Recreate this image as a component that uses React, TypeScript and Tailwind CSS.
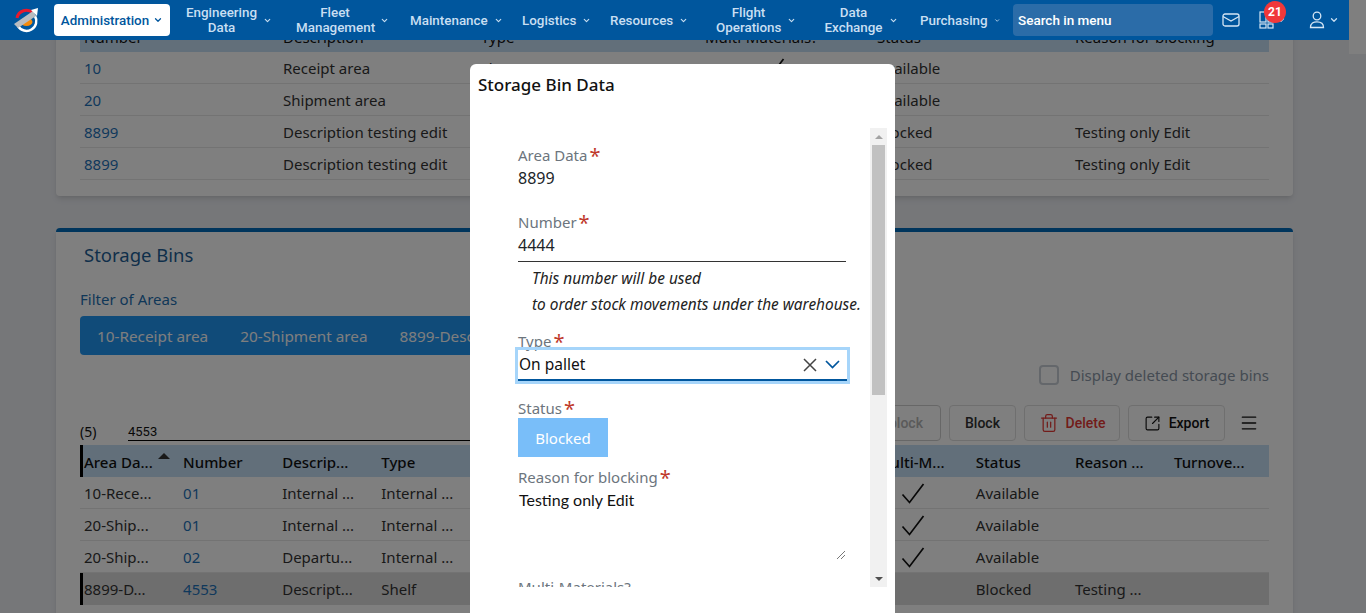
import { ChevronDown, Menu, SquareArrowOutUpRight, Trash2 } from 'lucide-react';

const navItems = [
  { lines: ['Engineering', 'Data'], slot: 'w-[110px]', width: 'w-[71px]' },
  { lines: ['Fleet', 'Management'], slot: 'w-[114px]', width: 'w-[78px]' },
  { lines: ['Maintenance'], slot: 'w-[112px]', width: '' },
  { lines: ['Logistics'], slot: 'w-[88px]', width: '' },
  { lines: ['Resources'], slot: 'w-[106px]', width: '' },
  { lines: ['Flight', 'Operations'], slot: 'w-[108px]', width: 'w-[65px]' },
  { lines: ['Data', 'Exchange'], slot: 'w-[96px]', width: 'w-[59px]' },
  { lines: ['Purchasing'], slot: 'w-[80px]', width: '' },
];

const areaRows = [
  { number: '10', description: 'Receipt area', type: 'Floor', check: true, status: 'Available', reason: '' },
  { number: '20', description: 'Shipment area', type: 'Floor', check: false, status: 'Available', reason: '' },
  { number: '8899', description: 'Description testing edit', type: 'Floor', check: false, status: 'Blocked', reason: 'Testing only Edit' },
  { number: '8899', description: 'Description testing edit', type: 'Floor', check: false, status: 'Blocked', reason: 'Testing only Edit' },
];

const binRows = [
  { area: '10-Rece...', number: '01', description: 'Internal ...', type: 'Internal ...', check: true, status: 'Available', reason: '', selected: false },
  { area: '20-Ship...', number: '01', description: 'Internal ...', type: 'Internal ...', check: true, status: 'Available', reason: '', selected: false },
  { area: '20-Ship...', number: '02', description: 'Departu...', type: 'Internal ...', check: true, status: 'Available', reason: '', selected: false },
  { area: '8899-D...', number: '4553', description: 'Descript...', type: 'Shelf', check: false, status: 'Blocked', reason: 'Testing ...', selected: true },
];

function Logo() {
  return (
    <svg width="28" height="26" viewBox="0 0 28 26" fill="none">
      <path d="M5 11 A9.5 9.5 0 0 1 21 6" stroke="#e8192c" strokeWidth="3" />
      <path d="M6 19 A9.5 9.5 0 0 0 23 9" stroke="#ffffff" strokeWidth="2.5" />
      <ellipse cx="14.5" cy="15" rx="6" ry="4" fill="#f58a0b" />
      <path d="M2 17 L21 4 L24 9 L6 21 Z" fill="#b9bcc0" />
      <path d="M19 3 L26 1 L25 9 Z" fill="#ffffff" />
    </svg>
  );
}

function MailIcon() {
  return (
    <svg width="18" height="14" viewBox="0 0 18 14" fill="none" stroke="#d5e6f5" strokeWidth="1.3">
      <rect x="1" y="1" width="16" height="12" rx="2" />
      <path d="M1 3.5 L9 8 L17 3.5" />
    </svg>
  );
}

function AppsIcon() {
  return (
    <svg width="16" height="18" viewBox="0 0 16 18" fill="none" stroke="#d5e6f5" strokeWidth="1.2">
      <rect x="1" y="1" width="6" height="10" />
      <rect x="1" y="13" width="6" height="4" />
      <rect x="9" y="13" width="5" height="4" />
      <rect x="9" y="6" width="5" height="5" />
    </svg>
  );
}

function UserIcon() {
  return (
    <svg width="16" height="18" viewBox="0 0 16 18" fill="none" stroke="#d5e6f5" strokeWidth="1.3">
      <circle cx="8" cy="5" r="3.8" />
      <path d="M1.5 16.5 C1.5 12 4.5 10.8 8 10.8 C11.5 10.8 14.5 12 14.5 16.5 Z" />
    </svg>
  );
}

function CheckMark() {
  return (
    <svg width="24" height="22" viewBox="0 0 24 22" fill="none" stroke="#111111" strokeWidth="1.7">
      <path d="M1.5 11.5 L8.5 19.5 L22.5 1" />
    </svg>
  );
}

function Required({ label }: { label: string }) {
  return (
    <div className="h-[22px] text-[15px] leading-[22px] text-[#6c757d]">
      {label}
      <span className="ml-[2px] align-[-2px] text-[20px] leading-none text-[#c0392b]">*</span>
    </div>
  );
}

export default function App() {
  return (
    <div className="relative flex h-[613px] w-[1366px] overflow-hidden bg-[#eceef3] font-['Noto_Sans',sans-serif]">
      <div className="w-[1349px] shrink-0">
        {/* Top bar */}
        <header className="relative z-30 flex h-10 items-center bg-[#00569d] font-['Roboto',sans-serif] text-[13.4px] font-medium leading-[15px] text-[#c9dff2]">
          <div className="ml-[12px] flex w-[28px] justify-center">
            <Logo />
          </div>
          <button className="ml-[14px] flex h-8 w-[116px] items-center justify-center gap-[4px] rounded bg-white text-[#00569d]">
            Administration
            <ChevronDown size={10} strokeWidth={3} />
          </button>
          <nav className="ml-[16px] flex w-[814px] items-center">
            {navItems.map((item) => (
              <div key={item.lines[0]} className={`flex shrink-0 items-center gap-[6px] ${item.slot}`}>
                <div className={`text-center ${item.width}`}>
                  {item.lines.map((line) => (
                    <div key={line}>{line}</div>
                  ))}
                </div>
                <ChevronDown size={9} strokeWidth={3} />
              </div>
            ))}
          </nav>
          <div className="ml-[13px] flex h-8 w-[200px] items-center rounded bg-[#2b6ca8] pl-[5px] text-[13.5px] text-white">Search in menu</div>
          <div className="ml-[9px] flex w-[18px] justify-center">
            <MailIcon />
          </div>
          <div className="relative ml-[19px] flex items-center gap-[1px]">
            <AppsIcon />
            <ChevronDown size={10} strokeWidth={3} />
            <span className="absolute -top-[10px] left-[5px] flex h-[22px] w-[22px] items-center justify-center rounded-full bg-[#f0383a] text-[12px] font-bold text-white">21</span>
          </div>
          <div className="ml-[23px] flex items-center gap-[4px]">
            <UserIcon />
            <ChevronDown size={10} strokeWidth={3} />
          </div>
        </header>

        <main className="-mt-5 px-[56px]">
          {/* Areas card */}
          <section className="rounded-b bg-white px-6 pb-4 shadow-md">
            <div className="grid h-8 grid-cols-[199px_198px_224px_172px_198px_1fr] items-center bg-[#c5dff5] pl-1 pt-[2px] text-[15px] text-[#111111]">
              <span>Number</span>
              <span>Description</span>
              <span>Type</span>
              <span>Multi-Materials?</span>
              <span>Status</span>
              <span>Reason for blocking</span>
            </div>
            {areaRows.map((row, index) => (
              <div key={index} className="grid h-8 grid-cols-[199px_198px_224px_172px_198px_1fr] items-center border-b border-[#e6e6e6] pl-1 pt-[2px] text-[15px] text-[#333333]">
                <span className="text-[#1f72b8]">{row.number}</span>
                <span>{row.description}</span>
                <span>{row.type}</span>
                <span className="pl-[56px]">{row.check && <CheckMark />}</span>
                <span>{row.status}</span>
                <span>{row.reason}</span>
              </div>
            ))}
          </section>

          {/* Storage bins card */}
          <section className="mt-8 rounded-t border-t-4 border-[#006ab8] bg-white px-6 pb-4 shadow-md">
            <h2 className="ml-1 pt-[9px] text-[18.5px] leading-7 text-[#1f5f96]">Storage Bins</h2>
            <div className="mt-[19px] text-[15px] leading-[22px] text-[#1f6fb0]">Filter of Areas</div>
            <div className="mt-[6px] inline-flex h-[39px] items-center rounded bg-[#2196f3] px-[1px] pt-[2px] text-[15.3px] text-[#fdfdfd]">
              <span className="px-4">10-Receipt area</span>
              <span className="px-4">20-Shipment area</span>
              <span className="px-4">8899-Description testing edit</span>
            </div>
            <div className="mt-[11px] flex h-[18px] items-center justify-end gap-[11px] text-[15px] text-[#8a97a6]">
              <span className="h-5 w-5 rounded border-2 border-[#c9cfd6] bg-white" />
              <span>Display deleted storage bins</span>
            </div>
            <div className="mt-[21px] flex h-9 items-end justify-between">
              <div className="flex items-end text-[14px] leading-[18px] text-[#111111]">
                <span className="w-12">(5)</span>
                <span className="w-[400px] border-b border-black font-['Roboto',sans-serif] text-[13px] leading-4">4553</span>
              </div>
              <div className="flex items-center gap-2 self-stretch font-['Roboto',sans-serif] text-[14px] font-medium">
                <button className="flex h-9 w-[87px] items-center justify-center rounded border border-[#cfcfcf] text-[#b5b5b5]">Unblock</button>
                <button className="flex h-9 w-[67px] items-center justify-center rounded border border-[#dedede] text-[#333333]">Block</button>
                <button className="flex h-9 w-[96px] items-center justify-center gap-[7px] rounded border border-[#dedede] text-[#e53935]">
                  <Trash2 size={20} strokeWidth={1.5} />
                  Delete
                </button>
                <button className="flex h-9 w-[97px] items-center justify-center gap-[8px] rounded border border-[#dedede] text-[#111111]">
                  <SquareArrowOutUpRight size={17} strokeWidth={1.6} />
                  Export
                </button>
                <span className="ml-[6px] mr-[10px] text-[#111111]">
                  <Menu size={20} strokeWidth={1.6} />
                </span>
              </div>
            </div>
            <div className="mt-1 grid h-8 grid-cols-[repeat(12,99.1px)] items-center border-l-[3px] border-black bg-[#c5dff5] pl-[1px] pt-[2px] text-[15px] font-medium text-[#111111]">
              <span className="relative">
                Area Da...
                <span className="absolute left-[74px] top-[2px] h-0 w-0 border-x-[6px] border-b-[6px] border-x-transparent border-b-[#333333]" />
              </span>
              <span>Number</span>
              <span>Descrip...</span>
              <span>Type</span>
              <span />
              <span />
              <span />
              <span />
              <span>Multi-M...</span>
              <span>Status</span>
              <span>Reason ...</span>
              <span>Turnove...</span>
            </div>
            {binRows.map((row) => (
              <div key={row.area + row.number} className={row.selected ? 'grid h-8 grid-cols-[repeat(12,99.1px)] items-center border-l-[3px] border-black bg-[#dcdcdc] pl-[1px] text-[15px] text-[#333333]' : 'grid h-8 grid-cols-[repeat(12,99.1px)] items-center border-b border-[#e6e6e6] pl-1 pt-[2px] text-[15px] text-[#333333]'}>
                <span>{row.area}</span>
                <span className="text-[#1f72b8]">{row.number}</span>
                <span>{row.description}</span>
                <span>{row.type}</span>
                <span />
                <span />
                <span />
                <span />
                <span className="pl-[24px]">{row.check && <CheckMark />}</span>
                <span>{row.status}</span>
                <span>{row.reason}</span>
                <span />
              </div>
            ))}
          </section>
        </main>
      </div>
      <div className="h-[54px] w-[17px] bg-white" />

      {/* Dimmed backdrop */}
      <div className="absolute inset-0 z-20 bg-black/50" />

      {/* Dialog */}
      <div className="absolute left-[470px] top-[64px] z-20 h-[549px] w-[425px] rounded-t-md bg-white">
        <h3 className="pl-2 pt-[9px] text-[17px] font-medium leading-6 text-[#111111]">Storage Bin Data</h3>
        <div className="mt-[31px] flex h-[459px] pr-2">
          <div className="h-full w-[400px] overflow-hidden pl-12 pt-4">
            <Required label="Area Data" />
            <div className="mt-[1px] text-[16px] leading-[22px] text-[#212529]">8899</div>
            <div className="mt-[22px]">
              <Required label="Number" />
            </div>
            <div className="mt-[1px] h-[28px] w-[328px] border-b border-[#333333] text-[16px] leading-[22px] text-[#212529]">4444</div>
            <div className="mt-1 whitespace-nowrap pl-[14px] text-[15.4px] italic leading-[26px] text-[#222222]">
              <div>This number will be used</div>
              <div>to order stock movements under the warehouse.</div>
            </div>
            <div className="mt-3">
              <Required label="Type" />
            </div>
            <div className="-mt-[2px] flex h-[31px] w-[329px] items-center justify-between border-b-2 border-[#00569d] pl-[1px] pr-[7px] text-[15.5px] text-[#111111] outline-[3px] outline-[#a6d5fa]">
              <span>On pallet</span>
              <span className="flex items-center gap-[8px]">
                <svg width="14" height="14" viewBox="0 0 14 14" fill="none" stroke="#444444" strokeWidth="1.5">
                  <path d="M1 1 L13 13 M13 1 L1 13" />
                </svg>
                <svg width="15" height="9" viewBox="0 0 15 9" fill="none" stroke="#00569d" strokeWidth="1.7">
                  <path d="M1 1 L7.5 7.5 L14 1" />
                </svg>
              </span>
            </div>
            <div className="mt-[16px]">
              <Required label="Status" />
            </div>
            <button className="-mt-[1px] block h-[39px] w-[90px] bg-[#79bef9] pt-[2px] text-[15px] text-white">Blocked</button>
            <div className="mt-[9px]">
              <Required label="Reason for blocking" />
            </div>
            <div className="relative mt-[1px] h-[71px] w-[328px] pl-[1px] font-['Lato',sans-serif] text-[16px] leading-[22px] text-[#111111]">
              Testing only Edit
              <svg className="absolute bottom-0 right-0" width="10" height="10" viewBox="0 0 10 10" stroke="#555555" strokeWidth="0.8">
                <path d="M1 9 L9 1 M5 9 L9 5" />
              </svg>
            </div>
            <div className="mt-[16px]">
              <div className="h-[22px] text-[15px] leading-[22px] text-[#6c757d]">Multi-Materials?</div>
            </div>
          </div>
          {/* Scroll track */}
          <div className="flex h-full w-[17px] flex-col items-center bg-[#f1f1f1] px-[2px]">
            <div className="flex h-[17px] items-center justify-center">
              <span className="h-0 w-0 border-x-[4px] border-b-[4px] border-x-transparent border-b-[#a3a3a3]" />
            </div>
            <div className="h-[250px] w-full bg-[#c1c1c1]" />
            <div className="flex-1" />
            <div className="flex h-[17px] items-center justify-center">
              <span className="h-0 w-0 border-x-[4px] border-t-[4px] border-x-transparent border-t-[#505050]" />
            </div>
          </div>
        </div>
      </div>
    </div>
  );
}
